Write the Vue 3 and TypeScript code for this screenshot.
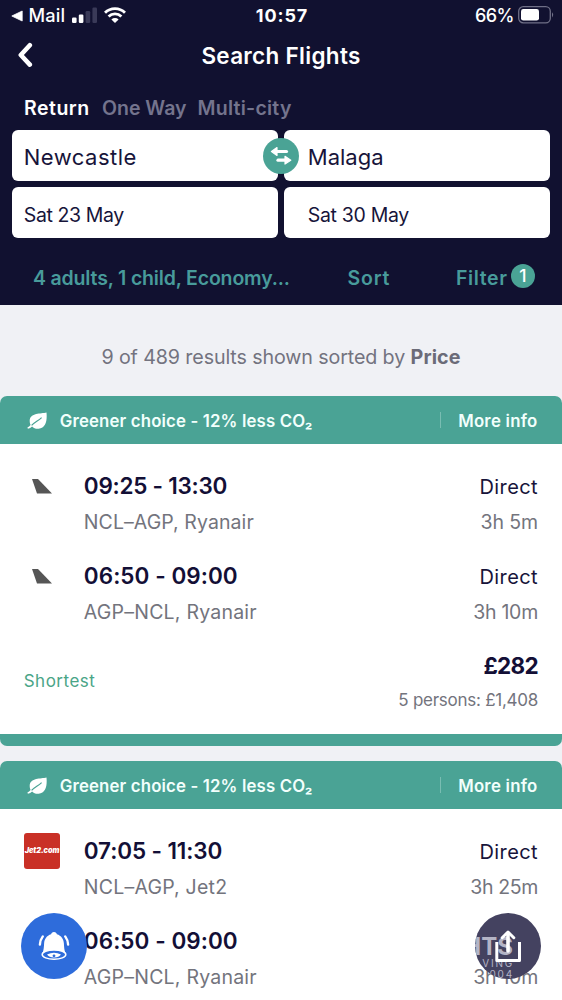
<script setup lang="ts">
interface Leg {
  id: string
  carrier: 'tail' | 'jet2'
  times: string
  timesClass: string
  route: string
  routeClass: string
  duration: string
  durationClass: string
}
interface Offer {
  id: string
  legs: Leg[]
  tag?: string
  price?: string
  total?: string
}

const offers: Offer[] = [
  {
    id: 'ryanair-ryanair',
    legs: [
      { id: 'out', carrier: 'tail', times: '09:25 - 13:30', timesClass: 'tight', route: 'NCL–AGP, Ryanair', routeClass: 'wide', duration: '3h 5m', durationClass: 'snug' },
      { id: 'back', carrier: 'tail', times: '06:50 - 09:00', timesClass: 'wide', route: 'AGP–NCL, Ryanair', routeClass: 'wider', duration: '3h 10m', durationClass: 'tight' },
    ],
    tag: 'Shortest',
    price: '£282',
    total: '5 persons: £1,408',
  },
  {
    id: 'jet2-ryanair',
    legs: [
      { id: 'out', carrier: 'jet2', times: '07:05 - 11:30', timesClass: 'plain', route: 'NCL–AGP, Jet2', routeClass: 'wider', duration: '3h 25m', durationClass: 'tighter' },
      { id: 'back', carrier: 'tail', times: '06:50 - 09:00', timesClass: 'wide', route: 'AGP–NCL, Ryanair', routeClass: 'wider', duration: '3h 10m', durationClass: 'tight' },
    ],
  },
]
</script>

<template>
  <div class="screen">
    <header class="top">
      <div class="status">
        <div class="status-left">
          <svg class="back-app" viewBox="0 0 12 12"><path d="M0.8 6 11.2 1V11Z" fill="#fff" stroke="#fff" stroke-width="0.8" stroke-linejoin="round" /></svg>
          <span class="mail">Mail</span>
          <svg class="signal" viewBox="0 0 26 16">
            <rect x="0" y="10.5" width="4.6" height="5.5" rx="1.2" fill="#fff" />
            <rect x="6.8" y="7.5" width="4.6" height="8.5" rx="1.2" fill="#fff" />
            <rect x="13.6" y="4" width="4.6" height="12" rx="1.2" fill="#3a3a58" />
            <rect x="20.4" y="0.5" width="4.6" height="15.5" rx="1.2" fill="#3a3a58" />
          </svg>
          <svg class="wifi" viewBox="0 0 22 16" fill="none" stroke="#fff">
            <path d="M1 5.700a14.200 14.200 0 0 1 20 0" stroke-width="2.9" />
            <path d="M4.600 9.500a9.200 9.200 0 0 1 12.800 0" stroke-width="2.8" />
            <path d="M11 16 7.400 12.500a5.100 5.100 0 0 1 7.200 0Z" fill="#fff" stroke="none" />
          </svg>
        </div>
        <span class="clock">10:57</span>
        <div class="status-right">
          <span class="pct">66%</span>
          <svg class="battery" viewBox="0 0 36 18">
            <rect x="0.7" y="0.7" width="31.6" height="16.2" rx="4.6" fill="none" stroke="#6f6f86" stroke-width="1.3" />
            <rect x="3" y="3" width="18" height="11.6" rx="2.4" fill="#fff" />
            <path d="M34 6.200q2.400 2.600 0 5.200Z" fill="#6f6f86" />
          </svg>
        </div>
      </div>

      <div class="title-bar">
        <svg class="chevron" viewBox="0 0 16 26"><path d="M12.800 3.200 3.800 13 12.800 22.600" fill="none" stroke="#fff" stroke-width="4.6" stroke-linecap="round" stroke-linejoin="round" /></svg>
        <h1 class="title">Search Flights</h1>
      </div>

      <nav class="tabs">
        <span class="tab tab-on">Return</span>
        <span class="tab tab-one">One Way</span>
        <span class="tab tab-multi">Multi-city</span>
      </nav>

      <div class="fields">
        <div class="field place"><span class="from">Newcastle</span></div>
        <div class="field place"><span class="to">Malaga</span></div>
        <div class="field date"><span class="out">Sat 23 May</span></div>
        <div class="field date"><span class="back">Sat 30 May</span></div>
        <div class="swap">
          <svg viewBox="0 0 36 36" fill="none" stroke="#fff" stroke-linejoin="round" stroke-linecap="round">
            <path d="M13 13.500H23.500" stroke-width="3.2" />
            <path d="M14 9.600V17.400L8.400 13.500Z" fill="#fff" stroke-width="1.2" />
            <path d="M15 22.200H22" stroke-width="3.2" />
            <path d="M22 18.300V26.100L27.800 22.200Z" fill="#fff" stroke-width="1.2" />
          </svg>
        </div>
      </div>

      <div class="actions">
        <span class="pax">4 adults, 1 child, Economy...</span>
        <span class="sort">Sort</span>
        <span class="filter">Filter</span>
        <span class="badge">1</span>
      </div>
    </header>

    <p class="summary">9 of 489 results shown sorted by <b>Price</b></p>

    <main class="offers">
      <article v-for="offer in offers" :key="offer.id" class="offer">
        <div class="banner">
          <svg class="leaf" viewBox="0 0 20 18">
            <path d="M19.500 0.500C14 2 3 0.500 2.700 8.800c0 1.700.3 2.900.9 4.100C2.600 14.100 1.600 14.900.4 15.500l.5 1.300c1.700-.5 3-1.300 4.200-2.400 1.600 1.800 3.900 2.700 6.500 2.400C18.800 16 20.300 9 19.500 0.500Z" fill="#fff" />
            <path d="M4.600 13.400C7.600 10.200 11.200 8.800 14.600 5.600" fill="none" stroke="#4aa395" stroke-width="1.2" />
          </svg>
          <span class="choice">Greener choice - 12% less CO₂</span>
          <span class="divider"></span>
          <span class="more">More info</span>
        </div>
        <div class="body">
          <div v-for="leg in offer.legs" :key="leg.id" class="leg">
            <div class="logo">
              <svg v-if="leg.carrier === 'tail'" class="tail" viewBox="0 0 20 15"><path d="M0 0H6L20 14.500H5Z" fill="#565656" /></svg>
              <div v-else class="jet">Jet2.com</div>
            </div>
            <div class="leg-main">
              <div class="times" :class="leg.timesClass">{{ leg.times }}</div>
              <div class="route" :class="leg.routeClass">{{ leg.route }}</div>
            </div>
            <div class="leg-side">
              <div class="direct">Direct</div>
              <div class="route" :class="leg.durationClass">{{ leg.duration }}</div>
            </div>
          </div>
          <div v-if="offer.price" class="foot">
            <span class="tag">{{ offer.tag }}</span>
            <div class="cost">
              <div class="amount">{{ offer.price }}</div>
              <div class="total">{{ offer.total }}</div>
            </div>
          </div>
        </div>
      </article>
    </main>

    <div class="fab alert">
      <svg viewBox="0 0 66 66">
        <path d="M33 19c1.700 0 2.700 1 2.900 2.300 4.400 1.400 6.700 4.800 7 9.200.3 5.500.7 8.400 2.300 10.900H20.800c1.600-2.500 2-5.400 2.300-10.900.3-4.400 2.600-7.800 7-9.200C30.300 20 31.300 19 33 19Z" fill="#fff" />
        <ellipse cx="33" cy="41.6" rx="11.8" ry="4.7" fill="#2e6cdb" stroke="#fff" stroke-width="1.5" />
        <path d="M26 41.500q7-3.600 14 0-2 3-7 3t-7-3Z" fill="#fff" />
        <circle cx="33" cy="42.8" r="1.4" fill="#2e6cdb" />
        <path d="M21.800 23.400Q19 27.200 18.900 31.500M44.200 23.400Q47 27.200 47.100 31.500" fill="none" stroke="#fff" stroke-width="2.4" stroke-linecap="round" />
      </svg>
    </div>
    <div class="fab share">
      <div class="mark">
        <span class="mark-a">HTS</span>
        <span class="mark-b">VING</span>
        <span class="mark-c">004</span>
      </div>
      <svg viewBox="0 0 66 66" fill="none" stroke="#fff" stroke-width="3" stroke-linejoin="round" stroke-linecap="round">
        <path d="M21.800 29V47.400H44.500V29" stroke-linecap="butt" />
        <path d="M33 38V21" stroke-width="3.6" />
        <path d="M27.200 24.700 33 19 38.800 24.700" />
      </svg>
    </div>
  </div>
</template>

<style>
html, body { margin: 0; background: #f0f1f5; overflow: hidden; }
</style>

<style scoped>
.screen {
  position: relative;
  width: 562px;
  height: 1000px;
  overflow: hidden;
  background: #f0f1f5;
  font-family: Inter, "Liberation Sans", sans-serif;
  color: #14112f;
  white-space: nowrap;
}
svg { display: block; flex: none; }

.top { height: 305px; background: #111130; color: #fff; }
.status {
  display: grid;
  grid-template-columns: 1fr auto 1fr;
  height: 31px;
  padding: 0 9px 0 11px;
}
.status-left, .status-right { display: flex; align-items: center; }
.status-right { justify-content: flex-end; }
.back-app { width: 12px; height: 12px; }
.mail { width: 43px; margin-left: 5.5px; font-size: 18.2px; font-weight: 500; line-height: 31px; letter-spacing: 0.15px; }
.signal { width: 26px; height: 16px; margin-top: -1px; }
.wifi { width: 22px; height: 16px; margin: -1px 0 0 6px; }
.clock { font-size: 18px; font-weight: 700; line-height: 31px; letter-spacing: 0.9px; }
.pct { font-size: 18px; font-weight: 500; line-height: 31px; letter-spacing: -0.5px; }
.battery { width: 36px; height: 18px; margin: -1px -1px 0 4px; }

.title-bar { display: grid; grid-template-columns: 1fr auto 1fr; align-items: center; height: 48px; padding: 0 17px; }
.chevron { width: 16px; height: 26px; margin-top: -3px; }
.title { margin: 0; font-size: 22.5px; font-weight: 600; line-height: 50px; letter-spacing: 0.3px; }

.tabs { display: flex; height: 51px; padding-left: 24px; font-size: 19.5px; font-weight: 600; line-height: 59px; color: #74748d; }
.tab-on { width: 78px; color: #fff; letter-spacing: 0.5px; }
.tab-one { width: 95.5px; letter-spacing: 0; }
.tab-multi { letter-spacing: 0.25px; }

.fields {
  position: relative;
  display: grid;
  grid-template-columns: 266px 266px;
  gap: 6px;
  padding: 0 12px;
}
.field { height: 51px; border-radius: 6px; background: #fff; color: #17143a; }
.place { padding-left: 11.8px; font-size: 22px; line-height: 54px; }
.date { padding-left: 11.8px; font-size: 19.5px; line-height: 57px; }
.to, .back { margin-left: 12px; }
.from { letter-spacing: 0.48px; }
.to { letter-spacing: 0; }
.out { letter-spacing: -0.4px; }
.back { letter-spacing: -0.32px; }
.swap { position: absolute; left: 263px; top: 8px; width: 36px; height: 36px; border-radius: 50%; background: #4aa395; }

.actions {
  display: flex;
  align-items: center;
  height: 66px;
  margin-top: 6px;
  padding: 1px 0 0 33px;
  box-sizing: border-box;
  font-size: 19.5px;
  font-weight: 600;
  line-height: 66px;
  color: #489b9b;
}
.pax { width: 314.5px; letter-spacing: -0.17px; }
.sort { width: 108.5px; letter-spacing: 0.8px; }
.filter { width: 55px; letter-spacing: 0.6px; }
.badge { width: 24px; height: 24px; margin-top: -4px; border-radius: 50%; background: #4aa395; color: #fff; font-size: 17.5px; font-weight: 500; line-height: 24px; text-align: center; }

.summary { height: 91px; margin: 0; padding-top: 1px; box-sizing: border-box; font-size: 19.7px; line-height: 103px; letter-spacing: -0.12px; text-align: center; color: #73737f; }
.summary b { font-weight: 700; letter-spacing: 0.1px; color: #6b6b78; }

.offers { display: grid; gap: 15px; }
.offer { overflow: hidden; border-radius: 7px; background: #fff; }
.offer:first-child { border-bottom: 12px solid #4aa395; }
.banner {
  display: flex;
  align-items: center;
  height: 48px;
  padding: 2px 24.5px 0 26.5px;
  box-sizing: border-box;
  background: #4aa395;
  color: #f2fffc;
  font-size: 16.8px;
  font-weight: 600;
  line-height: 50px;
}
.leaf { width: 20px; height: 18px; margin-top: -1px; }
.choice { margin-left: 13.3px; letter-spacing: 0.15px; }
.divider { width: 1px; height: 16px; margin: -2px 0 0 auto; background: #79bdb2; }
.more { margin-left: 17.5px; letter-spacing: 0.24px; }

.body { display: grid; gap: 18px; height: 290px; padding: 24px 24px 0; box-sizing: border-box; align-content: start; }
.leg { display: flex; height: 72px; }
.logo { width: 36px; height: 36px; display: grid; place-items: center; }
.tail { width: 20px; height: 15px; }
.jet { width: 36px; height: 36px; border-radius: 3px; background: #c93026; color: #fff; font: italic 900 7.4px/35px Inter, sans-serif; letter-spacing: -0.1px; text-align: center; }
.leg-main { margin-left: 23.8px; }
.leg-side { margin-left: auto; text-align: right; }
.times { font-size: 22.5px; font-weight: 600; line-height: 36px; color: #130f36; }
.times.tight { letter-spacing: -0.25px; }
.times.wide { letter-spacing: 0.05px; }
.times.plain { letter-spacing: -0.12px; }
.route { font-size: 19.5px; line-height: 36px; color: #73747d; }
.route.wide { letter-spacing: 0.08px; }
.route.wider { letter-spacing: 0.22px; }
.route.snug { letter-spacing: -0.12px; }
.route.tight { letter-spacing: -0.25px; }
.route.tighter { letter-spacing: -0.35px; }
.direct { height: 36px; font-size: 20px; line-height: 38px; letter-spacing: 0.4px; color: #17143a; }

.foot { display: flex; justify-content: space-between; height: 68px; }
.tag { margin-left: -0.3px; font-size: 17px; line-height: 67px; letter-spacing: 0.5px; color: #4aa587; }
.cost { text-align: right; }
.amount { font-size: 22.5px; font-weight: 700; line-height: 36px; letter-spacing: -0.7px; color: #130f36; }
.total { font-size: 17px; line-height: 32px; letter-spacing: -0.26px; color: #73747d; }

.fab { position: absolute; top: 913px; width: 66px; height: 66px; border-radius: 50%; overflow: hidden; }
.fab svg { position: relative; width: 66px; height: 66px; }
.alert { left: 21px; background: #2e6cdb; }
.share { left: 475px; background: #444260; }
.mark { position: absolute; right: 28px; top: 22px; display: grid; justify-items: end; color: #b4b4c6; }
.mark-a { font-size: 24px; font-weight: 700; line-height: 23px; }
.mark-b { margin-right: -1px; font-size: 10px; line-height: 11px; letter-spacing: 1.8px; }
.mark-c { margin-right: -1px; font-size: 10px; line-height: 11px; letter-spacing: 1.8px; }
</style>
